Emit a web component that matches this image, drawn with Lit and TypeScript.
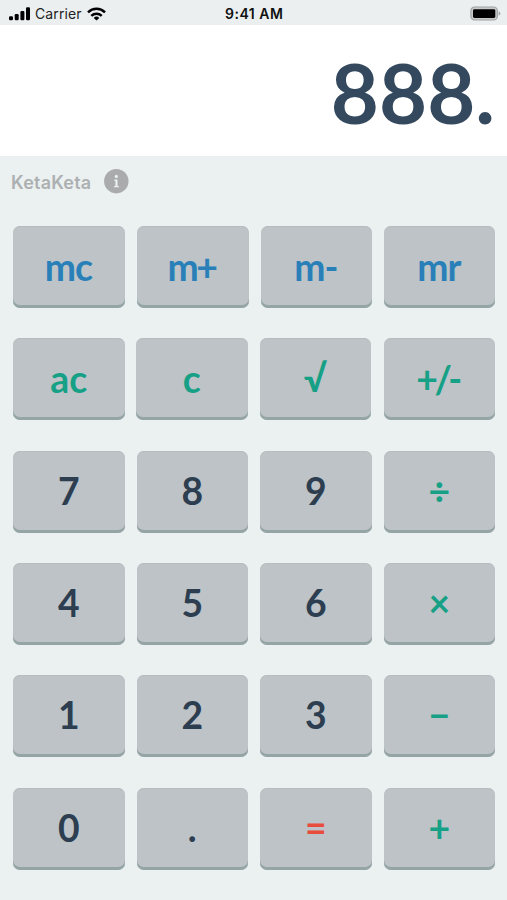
import { LitElement, html, css, svg } from "lit";
import { customElement, property } from "lit/decorators.js";

type Tone = "memory" | "action" | "digit" | "equals";
interface Key { label: string; tone: Tone; fit?: string; }
interface Row { spread: string; keys: Key[]; }

const keys = (labels: string[], tone: Tone, fit = ""): Key[] =>
  labels.map((label) => ({ label, tone, fit }));

const ROWS: Row[] = [
  {
    spread: "wide",
    keys: [
      { label: "mc", tone: "memory", fit: "word snug" },
      { label: "m+", tone: "memory", fit: "word tight" },
      { label: "m-", tone: "memory", fit: "word snug" },
      { label: "mr", tone: "memory", fit: "word snug" },
    ],
  },
  {
    spread: "narrow",
    keys: [
      ...keys(["ac", "c"], "action", "word"),
      { label: "√", tone: "action" },
      { label: "+/-", tone: "action", fit: "word tightest" },
    ],
  },
  { spread: "even", keys: [...keys(["7", "8", "9"], "digit"), ...keys(["÷"], "action")] },
  { spread: "even", keys: [...keys(["4", "5", "6"], "digit"), ...keys(["×"], "action")] },
  { spread: "even", keys: [...keys(["1", "2", "3"], "digit"), ...keys(["−"], "action")] },
  { spread: "even", keys: [...keys(["0", "."], "digit"), ...keys(["="], "equals"), ...keys(["+"], "action")] },
];

@customElement("status-bar")
export class StatusBar extends LitElement {
  static styles = css`
    :host {
      display: grid;
      grid-template-columns: 1fr auto 1fr;
      align-items: center;
      height: 25px;
      box-sizing: border-box;
      padding: 2px 6px 0 9px;
      background: #ebeff0;
      color: #111;
      font: 400 14px/20px Inter, sans-serif;
    }
    .left { display: flex; align-items: center; }
    .signal { display: block; width: 21px; height: 14px; }
    .carrier { margin-left: 5px; letter-spacing: 0.1px; color: #222; }
    .wifi { display: block; width: 19px; height: 14px; margin-left: 5px; }
    .time { font-weight: 600; letter-spacing: 0.5px; margin-right: 1.5px; }
    .battery { display: block; justify-self: end; width: 31px; height: 15px; }
  `;

  render() {
    return html`
      <div class="left">
        <svg class="signal" viewBox="0 0 21 14">
          ${[[0, 4], [5.7, 6.3], [11.4, 9.4], [17, 13]].map(
            ([x, h]) => svg`<rect x=${x} y=${13.3 - h} width="4" height=${h} rx="1.2" />`
          )}
        </svg>
        <span class="carrier">Carrier</span>
        <svg class="wifi" viewBox="0 0 19 14" fill="none" stroke="#000" stroke-width="2.5">
          <path d="M1 5.3a12.2 12.2 0 0 1 17 0" />
          <path d="M4.3 8.8a7.5 7.5 0 0 1 10.4 0" />
          <path d="M9.5 13.6 6.7 10.9a4 4 0 0 1 5.6 0Z" fill="#000" stroke="none" />
        </svg>
      </div>
      <span class="time">9:41 AM</span>
      <svg class="battery" viewBox="0 0 31 15">
        <rect x="0.9" y="1" width="26.4" height="13" rx="3.6" fill="#c8caca" stroke="#a2a4a4" stroke-width="1.2" />
        <rect x="3" y="3.2" width="22.3" height="8.8" rx="1.4" />
        <path d="M28.6 5.3c2.3 1 2.3 3.5 0 4.5Z" fill="#a2a4a4" />
      </svg>
    `;
  }
}

@customElement("calc-key")
export class CalcKey extends LitElement {
  @property() label = "";
  @property() tone: Tone = "digit";
  @property() fit = "";

  static styles = css`
    :host { display: block; width: 111.5px; height: 82px; }
    .key {
      display: flex;
      align-items: center;
      justify-content: center;
      width: 100%;
      height: 100%;
      padding: 0 0 3px;
      border: 0;
      border-radius: 7px;
      background: #bdc3c7;
      box-shadow: inset 0 -3px 0 #95a5a6, inset 0 1px 0 #b5bebf;
      font: 700 37.3px/45px Lato, sans-serif;
    }
    .word { padding-bottom: 2px; }
    .memory { color: #2980b9; }
    .action { color: #16a085; }
    .digit { color: #2c3e50; }
    .equals { color: #e74c3c; }
    .snug span { letter-spacing: -1px; margin-right: 1px; }
    .tight span { letter-spacing: -2.5px; margin-right: 2.5px; }
    .tightest span { letter-spacing: -3.5px; margin-right: 3.5px; }
  `;

  render() {
    return html`<button class="key ${this.tone} ${this.fit}"><span>${this.label}</span></button>`;
  }
}

@customElement("app-root")
export class AppRoot extends LitElement {
  static styles = css`
    :host {
      display: flex;
      flex-direction: column;
      box-sizing: border-box;
      height: 900px;
      background: #ebf0f1;
    }
    .display {
      display: flex;
      align-items: center;
      justify-content: flex-end;
      height: 131px;
      box-sizing: border-box;
      padding: 2px 12px 0 0;
      background: #fff;
      color: #34495e;
      font: 700 83px/100px Lato, sans-serif;
    }
    .brand {
      display: flex;
      align-items: center;
      height: 70px;
      box-sizing: border-box;
      padding: 0 0 20px 11px;
      color: #adb0b1;
      font: 600 18px/24px Inter, sans-serif;
    }
    .name { padding-top: 3px; letter-spacing: 0.2px; }
    .info { display: block; width: 25px; height: 25px; margin-left: 13px; }
    .pad {
      display: flex;
      flex-direction: column;
      gap: 30.35px;
      padding: 0 13px;
    }
    .row { display: grid; }
    .wide { grid-template-columns: 124px 123.5px 123px 111.5px; }
    .narrow { grid-template-columns: 123px 123.5px 124px 111.5px; }
    .even { grid-template-columns: 123.5px 123.5px 123.5px 111.5px; }
  `;

  render() {
    return html`
      <status-bar></status-bar>
      <div class="display">888.</div>
      <div class="brand">
        <span class="name">KetaKeta</span>
        <svg class="info" viewBox="0 0 25 25">
          <circle cx="12.3" cy="12.2" r="12.2" fill="#a9abac" />
          <g fill="#ebf0f1">
            <circle cx="12.3" cy="7.4" r="1.6" />
            <path d="M10.2 10.4h3.3v6.5h1.4v1.4h-4.8v-1.4h1.3v-5.1h-1.2Z" />
          </g>
        </svg>
      </div>
      <div class="pad">
        ${ROWS.map(
          (row) => html`<div class="row ${row.spread}">
            ${row.keys.map(
              (k) => html`<calc-key .label=${k.label} .tone=${k.tone} .fit=${k.fit ?? ""}></calc-key>`
            )}
          </div>`
        )}
      </div>
    `;
  }
}
